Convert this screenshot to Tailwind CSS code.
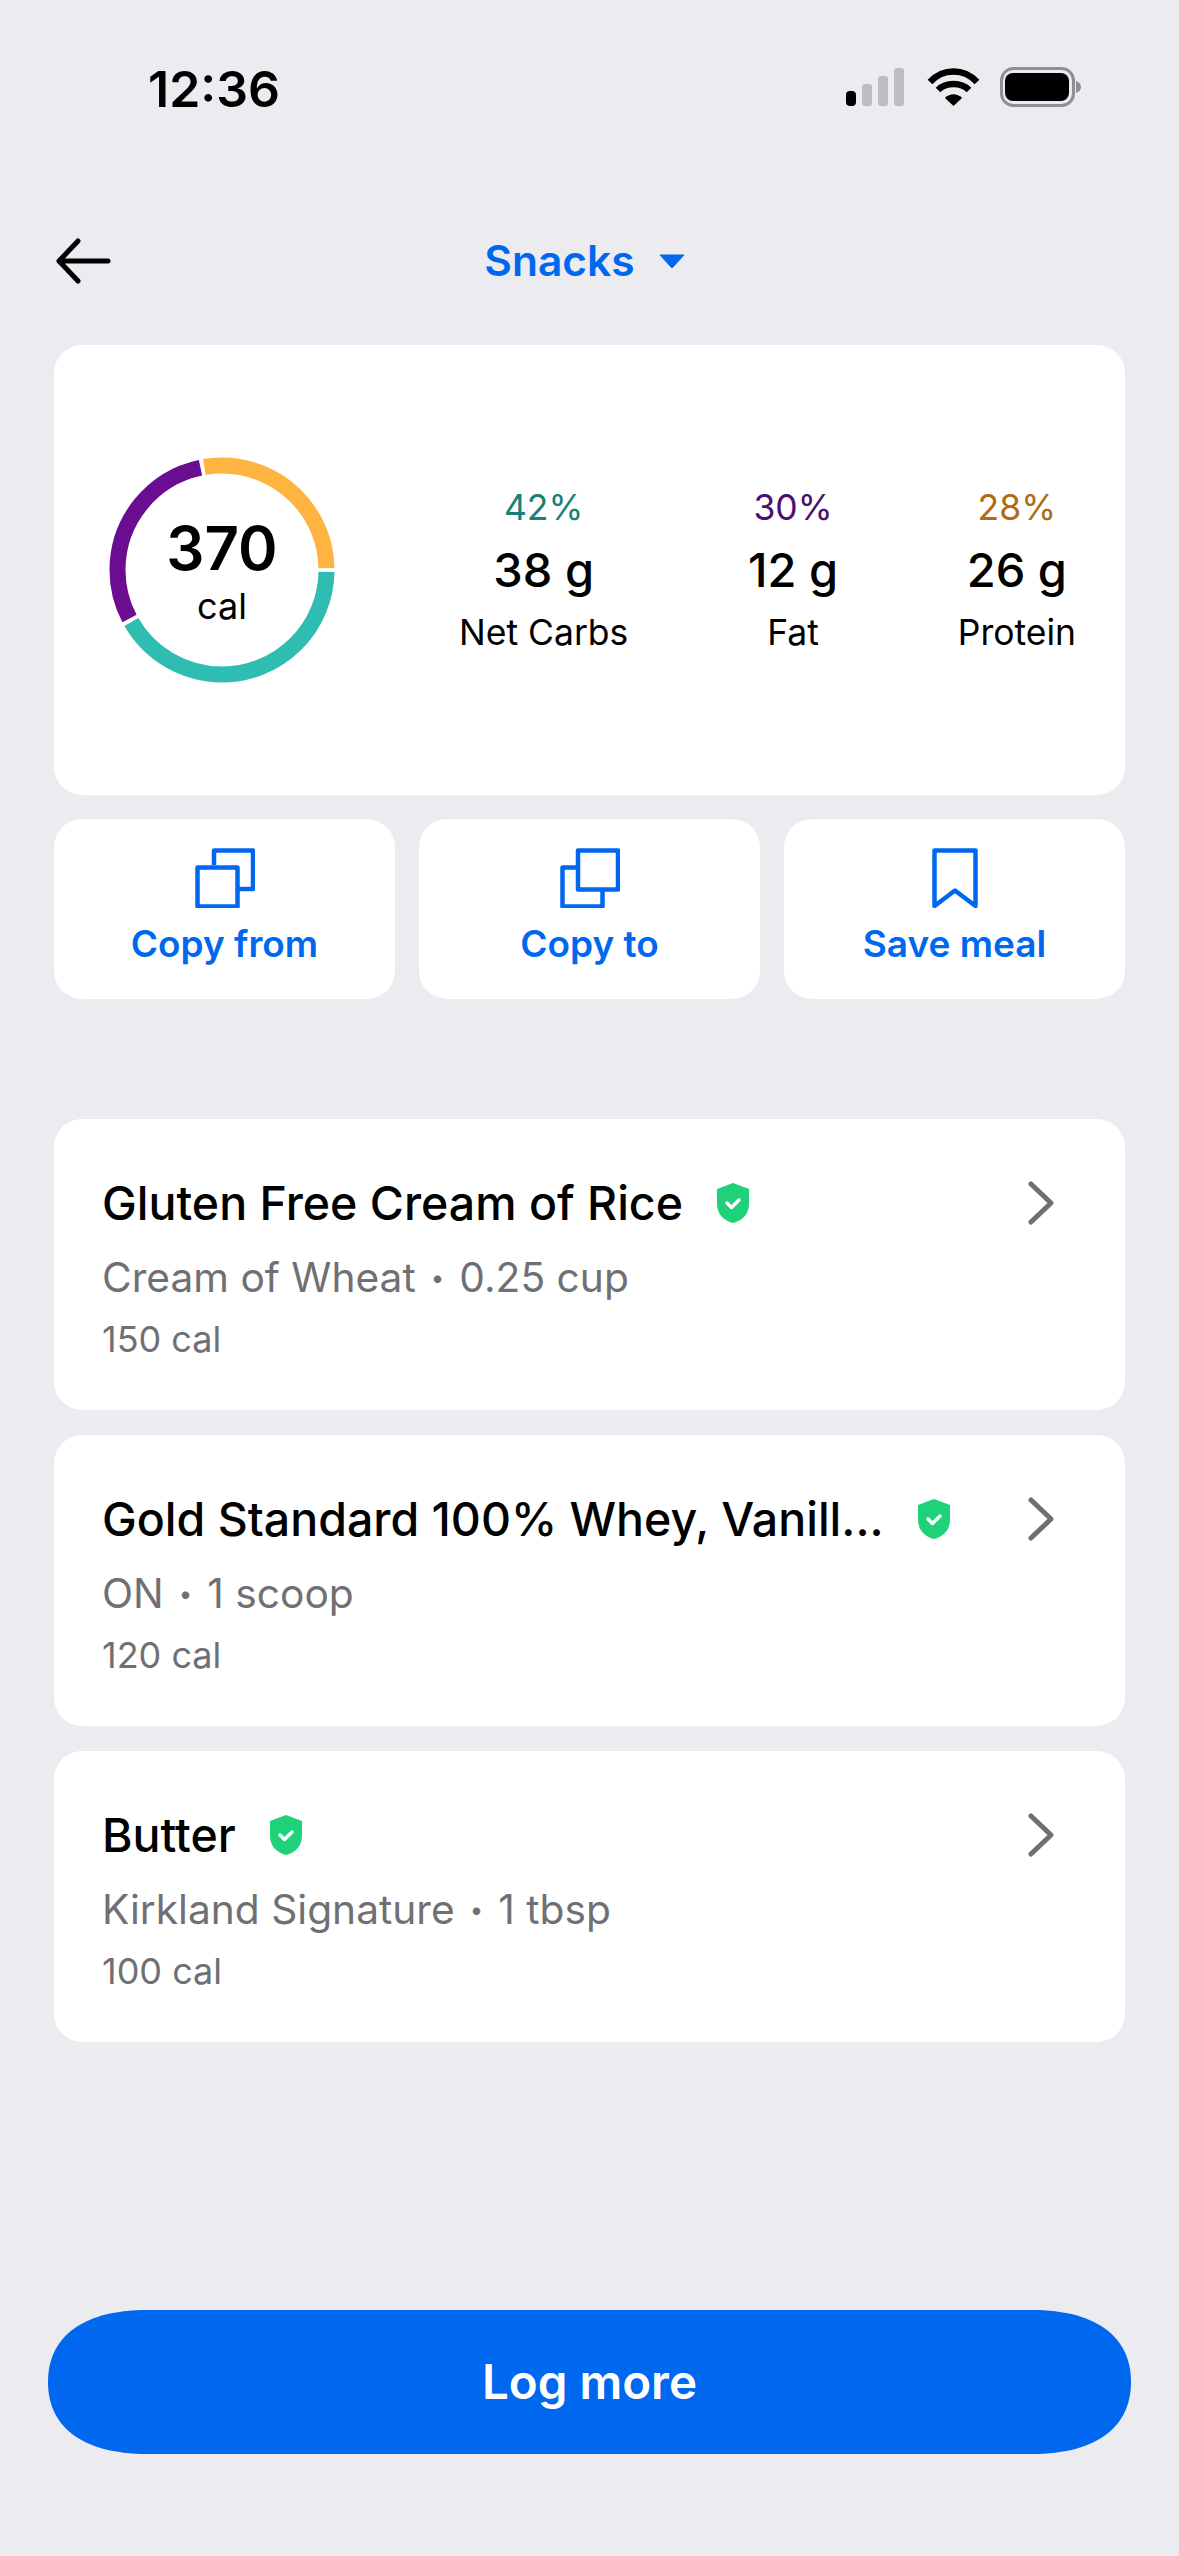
<!DOCTYPE html>
<html>
<head>
    <title>Snacks</title>
    <script src="https://cdn.jsdelivr.net/npm/@tailwindcss/browser@4"></script>
</head>
<body class="bg-[#ebebf0] font-[Inter,sans-serif]">
    <div class="w-[1179px] h-[2556px] flex flex-col overflow-hidden">
        <!-- Status bar -->
        <div class="h-[176px] flex justify-between items-start pt-[59px] pl-[148px] pr-[98px]">
            <span class="text-[50px] leading-[60px] font-semibold text-black">12:36</span>
            <svg width="235" height="42" viewBox="0 0 235 42" class="mt-[8px]">
                <rect x="0" y="24" width="10" height="15" rx="4" fill="#000"/>
                <rect x="16" y="17" width="10" height="22" rx="3" fill="#bdbdc2"/>
                <rect x="32" y="9" width="10" height="30" rx="3" fill="#bdbdc2"/>
                <rect x="48" y="1" width="10" height="38" rx="3" fill="#bdbdc2"/>
                <path d="M84 15 C97 1 118 1 131 15 M92 23 C100 15 115 15 123 23" fill="none" stroke="#000" stroke-width="6.5"/>
                <path d="M99 31 C104 26 111 26 116 31 L107.500 39 Z" fill="#000"/>
                <rect x="155.500" y="1.500" width="72" height="37" rx="12" fill="none" stroke="#8e8e93" stroke-width="3"/>
                <rect x="159" y="6" width="64" height="28" rx="8" fill="#000"/>
                <path d="M230 14 C233 15 235 17 235 20 C235 23 233 25 230 26 Z" fill="#8e8e93"/>
            </svg>
        </div>

        <!-- Nav -->
        <div class="h-[169px] relative flex items-start justify-center">
            <svg width="58" height="46" viewBox="0 0 58 46" class="absolute left-[54px] top-[62px]" fill="none" stroke="#000" stroke-width="5" stroke-linecap="round" stroke-linejoin="round">
                <path d="M54 23 H5 M24 3 L5 23 L24 43"/>
            </svg>
            <div class="flex items-center gap-[24px] h-[60px] mt-[55px] ml-[-10px]">
                <span class="text-[42.500px] leading-[60px] font-semibold text-[#0068ef]">Snacks</span>
                <svg width="26" height="15" viewBox="0 0 26 15"><path d="M1 1 H25 L13 14 Z" fill="#0068ef" stroke="#0068ef" stroke-linejoin="round"/></svg>
            </div>
        </div>

        <main class="px-[54px] flex flex-col flex-1">
            <!-- Summary -->
            <section class="h-[450px] bg-white rounded-[28px] flex items-center pl-[55px] pr-[49px]">
                <div class="relative w-[226px] h-[226px] shrink-0">
                    <svg width="226" height="226" viewBox="0 0 226 226" fill="none" stroke-width="16" class="absolute inset-0">
                        <circle cx="113" cy="113" r="104.500" pathLength="100" stroke="#2fbcb1" stroke-dasharray="41.400 58.600" stroke-dashoffset="-0.300"/>
                        <circle cx="113" cy="113" r="104.500" pathLength="100" stroke="#6a0d91" stroke-dasharray="29.400 70.600" stroke-dashoffset="-42.300"/>
                        <circle cx="113" cy="113" r="104.500" pathLength="100" stroke="#ffb341" stroke-dasharray="27.400 72.600" stroke-dashoffset="-72.300"/>
                    </svg>
                    <div class="absolute inset-0 flex flex-col items-center text-black">
                        <span class="mt-[56px] text-[60px] leading-[70px] font-semibold">370</span>
                        <span class="text-[36px] leading-[44px] mt-[1px]">cal</span>
                    </div>
                </div>
                <div class="flex-1 flex justify-between ml-[124px] text-center">
                    <div class="flex flex-col items-center">
                        <span class="text-[35.500px] leading-[44px] text-[#1b7f79]">42%</span>
                        <span class="text-[47px] leading-[56px] font-[450] text-black mt-[12px]">38 g</span>
                        <span class="text-[35.500px] leading-[44px] text-black mt-[13px]">Net Carbs</span>
                    </div>
                    <div class="flex flex-col items-center">
                        <span class="text-[35.500px] leading-[44px] text-[#4b0f70]">30%</span>
                        <span class="text-[47px] leading-[56px] font-[450] text-black mt-[12px]">12 g</span>
                        <span class="text-[35.500px] leading-[44px] text-black mt-[13px]">Fat</span>
                    </div>
                    <div class="flex flex-col items-center">
                        <span class="text-[35.500px] leading-[44px] text-[#b06a10]">28%</span>
                        <span class="text-[47px] leading-[56px] font-[450] text-black mt-[12px]">26 g</span>
                        <span class="text-[35.500px] leading-[44px] text-black mt-[13px]">Protein</span>
                    </div>
                </div>
            </section>

            <!-- Actions -->
            <section class="grid grid-cols-3 gap-[24px] mt-[24px]">
                <button class="h-[180px] bg-white rounded-[28px] flex flex-col items-center pt-[29px] text-[#0068ef]">
                    <svg width="60" height="60" viewBox="0 0 60 60" fill="none" stroke="#0068ef" stroke-width="4.500" stroke-linejoin="round">
                        <path d="M19 17 V2.500 H58 V41 H43"/>
                        <rect x="2.500" y="19.500" width="40" height="39"/>
                    </svg>
                    <span class="text-[37px] leading-[42px] font-semibold mt-[15px]">Copy from</span>
                </button>
                <button class="h-[180px] bg-white rounded-[28px] flex flex-col items-center pt-[29px] text-[#0068ef]">
                    <svg width="60" height="60" viewBox="0 0 60 60" fill="none" stroke="#0068ef" stroke-width="4.500" stroke-linejoin="round">
                        <rect x="18" y="2.500" width="40" height="39"/>
                        <path d="M18 19.500 H2.500 V58.500 H42.500 V41.500"/>
                    </svg>
                    <span class="text-[37px] leading-[42px] font-semibold mt-[15px]">Copy to</span>
                </button>
                <button class="h-[180px] bg-white rounded-[28px] flex flex-col items-center pt-[29px] text-[#0068ef]">
                    <svg width="46" height="60" viewBox="0 0 46 60" fill="none" stroke="#0068ef" stroke-width="4.500" stroke-linejoin="round">
                        <path d="M2.500 2.500 H43.500 V58 L23 42.500 L2.500 58 Z"/>
                    </svg>
                    <span class="text-[37px] leading-[42px] font-semibold mt-[15px]">Save meal</span>
                </button>
            </section>

            <!-- Foods -->
            <section class="flex flex-col gap-[25px] mt-[120px]">
                <div class="h-[291px] bg-white rounded-[28px] flex items-start pl-[48px] pr-[70px] pt-[54px]">
                    <div class="flex-1 min-w-0">
                        <div class="flex items-center gap-[33px] h-[60px]">
                            <span class="text-[46.500px] leading-[60px] font-medium text-black">Gluten Free Cream of Rice</span>
                            <svg width="34" height="40" viewBox="0 0 34 40" class="shrink-0"><path d="M17 0 L33 6 V21 C33 31 26 38 17 40 C8 38 1 31 1 21 V6 Z" fill="#1fd27a"/><path d="M11 20 L15.500 24.500 L23 17" fill="none" stroke="#fff" stroke-width="3.500" stroke-linecap="round" stroke-linejoin="round"/></svg>
                        </div>
                        <p class="flex items-center text-[40.700px] leading-[50px] text-[#707074] mt-[20px]">Cream of Wheat<span class="text-[24px] mx-[15px]">•</span>0.25 cup</p>
                        <p class="text-[36px] leading-[40px] text-[#707074] mt-[16px]">150 cal</p>
                    </div>
                    <svg width="28" height="44" viewBox="0 0 28 44" class="shrink-0 mt-[8px]" fill="none" stroke="#6e6e73" stroke-width="5" stroke-linecap="round" stroke-linejoin="round"><path d="M4 3 L24 22 L4 41"/></svg>
                </div>
                <div class="h-[291px] bg-white rounded-[28px] flex items-start pl-[48px] pr-[70px] pt-[54px]">
                    <div class="flex-1 min-w-0">
                        <div class="flex items-center gap-[33px] h-[60px]">
                            <span class="text-[46.500px] leading-[60px] font-medium text-black">Gold Standard 100% Whey, Vanill...</span>
                            <svg width="34" height="40" viewBox="0 0 34 40" class="shrink-0"><path d="M17 0 L33 6 V21 C33 31 26 38 17 40 C8 38 1 31 1 21 V6 Z" fill="#1fd27a"/><path d="M11 20 L15.500 24.500 L23 17" fill="none" stroke="#fff" stroke-width="3.500" stroke-linecap="round" stroke-linejoin="round"/></svg>
                        </div>
                        <p class="flex items-center text-[40.700px] leading-[50px] text-[#707074] mt-[20px]">ON<span class="text-[24px] mx-[15px]">•</span>1 scoop</p>
                        <p class="text-[36px] leading-[40px] text-[#707074] mt-[16px]">120 cal</p>
                    </div>
                    <svg width="28" height="44" viewBox="0 0 28 44" class="shrink-0 mt-[8px]" fill="none" stroke="#6e6e73" stroke-width="5" stroke-linecap="round" stroke-linejoin="round"><path d="M4 3 L24 22 L4 41"/></svg>
                </div>
                <div class="h-[291px] bg-white rounded-[28px] flex items-start pl-[48px] pr-[70px] pt-[54px]">
                    <div class="flex-1 min-w-0">
                        <div class="flex items-center gap-[33px] h-[60px]">
                            <span class="text-[46.500px] leading-[60px] font-medium text-black">Butter</span>
                            <svg width="34" height="40" viewBox="0 0 34 40" class="shrink-0"><path d="M17 0 L33 6 V21 C33 31 26 38 17 40 C8 38 1 31 1 21 V6 Z" fill="#1fd27a"/><path d="M11 20 L15.500 24.500 L23 17" fill="none" stroke="#fff" stroke-width="3.500" stroke-linecap="round" stroke-linejoin="round"/></svg>
                        </div>
                        <p class="flex items-center text-[40.700px] leading-[50px] text-[#707074] mt-[20px]">Kirkland Signature<span class="text-[24px] mx-[15px]">•</span>1 tbsp</p>
                        <p class="text-[36px] leading-[40px] text-[#707074] mt-[16px]">100 cal</p>
                    </div>
                    <svg width="28" height="44" viewBox="0 0 28 44" class="shrink-0 mt-[8px]" fill="none" stroke="#6e6e73" stroke-width="5" stroke-linecap="round" stroke-linejoin="round"><path d="M4 3 L24 22 L4 41"/></svg>
                </div>
            </section>
        </main>

        <!-- Footer button -->
        <div class="px-[48px] pb-[102px]">
            <button class="w-full h-[144px] bg-[#0068ef] [clip-path:path('M100_0C30_0_0_30_0_72C0_114_30_144_100_144H983C1053_144_1083_114_1083_72C1083_30_1053_0_983_0Z')] text-white text-[47.500px] font-semibold">Log more</button>
        </div>
    </div>
</body>
</html>
